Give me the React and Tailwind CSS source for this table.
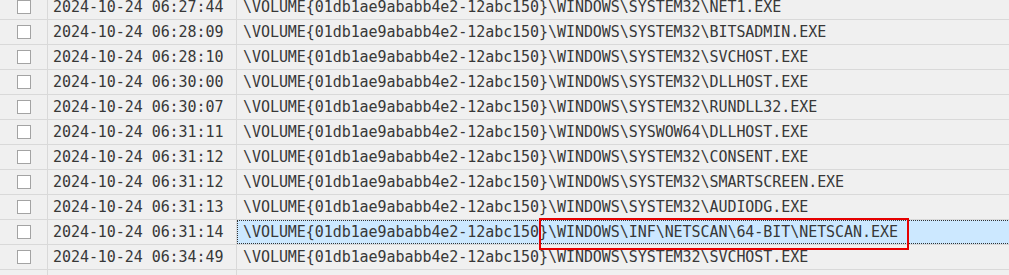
import React from 'react';

const rows = [
  ['2024-10-24 06:27:44', '\\VOLUME{01db1ae9ababb4e2-12abc150}\\WINDOWS\\SYSTEM32\\NET1.EXE'],
  ['2024-10-24 06:28:09', '\\VOLUME{01db1ae9ababb4e2-12abc150}\\WINDOWS\\SYSTEM32\\BITSADMIN.EXE'],
  ['2024-10-24 06:28:10', '\\VOLUME{01db1ae9ababb4e2-12abc150}\\WINDOWS\\SYSTEM32\\SVCHOST.EXE'],
  ['2024-10-24 06:30:00', '\\VOLUME{01db1ae9ababb4e2-12abc150}\\WINDOWS\\SYSTEM32\\DLLHOST.EXE'],
  ['2024-10-24 06:30:07', '\\VOLUME{01db1ae9ababb4e2-12abc150}\\WINDOWS\\SYSTEM32\\RUNDLL32.EXE'],
  ['2024-10-24 06:31:11', '\\VOLUME{01db1ae9ababb4e2-12abc150}\\WINDOWS\\SYSWOW64\\DLLHOST.EXE'],
  ['2024-10-24 06:31:12', '\\VOLUME{01db1ae9ababb4e2-12abc150}\\WINDOWS\\SYSTEM32\\CONSENT.EXE'],
  ['2024-10-24 06:31:12', '\\VOLUME{01db1ae9ababb4e2-12abc150}\\WINDOWS\\SYSTEM32\\SMARTSCREEN.EXE'],
  ['2024-10-24 06:31:13', '\\VOLUME{01db1ae9ababb4e2-12abc150}\\WINDOWS\\SYSTEM32\\AUDIODG.EXE'],
  ['2024-10-24 06:31:14', '\\VOLUME{01db1ae9ababb4e2-12abc150}\\WINDOWS\\INF\\NETSCAN\\64-BIT\\NETSCAN.EXE', true],
  ['2024-10-24 06:34:49', '\\VOLUME{01db1ae9ababb4e2-12abc150}\\WINDOWS\\SYSTEM32\\SVCHOST.EXE'],
  ['', ''],
];

function Row({ time, path, selected, empty }) {
  return (
    <div className="flex h-[25px] border-b border-[#d9d9d9]">
      {/* checkbox */}
      <div className="w-[48px] shrink-0 flex items-center border-r border-[#d9d9d9]">
        {!empty && (
          <div className="ml-[17px] w-[14px] h-[14px] bg-white border border-[#a3a3a3]" />
        )}
      </div>
      {/* time */}
      <div className="w-[189px] shrink-0 flex items-center pl-[5px] border-r border-[#d9d9d9]">
        {time}
      </div>
      {/* path */}
      <div
        className={
          selected
            ? "flex-1 flex items-center pl-[5px] bg-[#cce8ff] border border-dotted border-[#333] h-[24px]"
            : "flex-1 flex items-center pl-[6px]"
        }
      >
        {path}
      </div>
    </div>
  );
}

export default function App() {
  return (
    <div
      className="relative w-[1009px] h-[275px] overflow-hidden bg-[#f0f0f0] text-[#383838] text-[15px] leading-none tracking-[-0.06px] whitespace-nowrap"
      style={{ fontFamily: '"DejaVu Sans Mono", "Liberation Mono", monospace' }}
    >
      <div className="w-[1100px] -mt-[5px]">
        {rows.map((r, i) => (
          <Row key={i} time={r[0]} path={r[1]} selected={r[2]} empty={!r[0]} />
        ))}
      </div>
      {/* highlight box */}
      <div className="absolute left-[539px] top-[218px] w-[370px] h-[32px] border-2 border-[#e60000]" />
    </div>
  );
}
